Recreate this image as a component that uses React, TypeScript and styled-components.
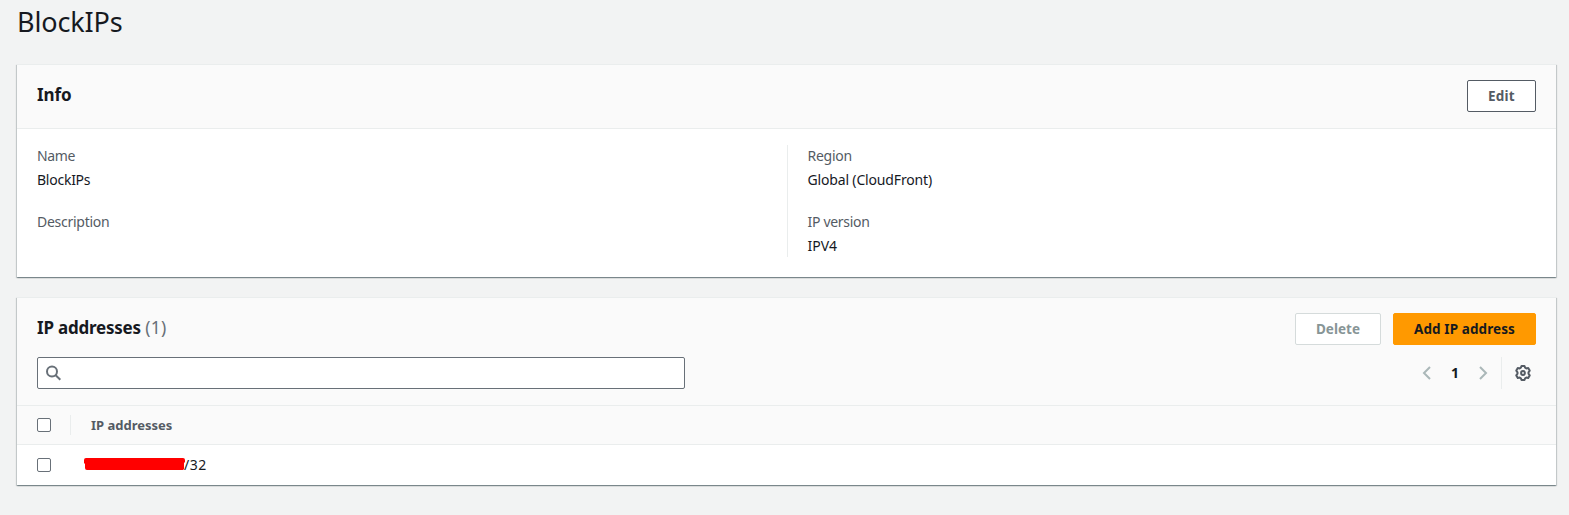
import React from "react";
import styled, { createGlobalStyle } from "styled-components";

const GlobalStyle = createGlobalStyle`
  * { box-sizing: border-box; }
  body {
    margin: 0;
    min-height: 515px;
    background: #f2f3f3;
    color: #16191f;
    font: 14px/22px "Noto Sans", sans-serif;
    overflow: hidden;
  }
`;

const Page = styled.main`
  display: flex;
  flex-direction: column;
  gap: 20px;
  padding: 4px 13px 0 17px;
`;

const Title = styled.h1`
  margin: 0 0 4px;
  height: 36px;
  font-size: 27px;
  line-height: 35px;
  font-weight: 400;
`;

const Panel = styled.section`
  background: #fff;
  border-top: 1px solid #eaeded;
  box-shadow: 0 1px 1px 0 rgba(0, 28, 36, 0.3), 1px 1px 1px 0 rgba(0, 28, 36, 0.15),
    -1px 1px 1px 0 rgba(0, 28, 36, 0.15);
`;

const PanelHeader = styled.header<{ $height: number }>`
  height: ${(p) => p.$height}px;
  padding: 15px 20px 0;
  background: #fafafa;
  border-bottom: 1px solid #eaeded;
`;

const Bar = styled.div`
  display: flex;
  justify-content: space-between;
  height: 32px;
  margin-bottom: 12px;
`;

const Heading = styled.h2`
  margin: 0;
  font-size: 17px;
  line-height: 29px;
  font-weight: 700;
`;

const Text = styled.span<{ $ls?: number }>`
  letter-spacing: ${(p) => p.$ls ?? 0}px;
`;

const Counter = styled(Text)`
  color: #687078;
  font-size: 17.5px;
  font-weight: 400;
`;

const Actions = styled.div`
  display: flex;
  gap: 12px;
`;

const tones = {
  normal: { fg: "#545b64", bg: "#fff", border: "#545b64" },
  disabled: { fg: "#879596", bg: "#fff", border: "#d5dbdb" },
  primary: { fg: "#16191f", bg: "#ff9900", border: "#ff9900" },
};

const Button = styled.button<{ $tone: keyof typeof tones; $width: number }>`
  width: ${(p) => p.$width}px;
  height: 32px;
  padding: 0;
  border: 1px solid ${(p) => tones[p.$tone].border};
  border-radius: 2px;
  background: ${(p) => tones[p.$tone].bg};
  color: ${(p) => tones[p.$tone].fg};
  font: 700 13.5px/22px "Noto Sans", sans-serif;
  white-space: nowrap;
`;

const Columns = styled.div`
  display: grid;
  grid-template-columns: 750px 1fr;
  height: 148px;
  padding: 16px 20px 20px;
`;

const Column = styled.dl<{ $divided?: boolean }>`
  display: flex;
  flex-direction: column;
  gap: 20px;
  margin: 0;
  height: 112px;
  border-left: ${(p) => (p.$divided ? "1px solid #eaeded" : "0")};
  padding-left: ${(p) => (p.$divided ? 19.5 : 0)}px;
`;

const Field = styled.div`
  height: 46px;
`;

const Label = styled.dt`
  color: #545b64;
  margin-bottom: 2px;
`;

const Value = styled.dd`
  margin: 0;
`;

const Search = styled.label`
  display: flex;
  align-items: center;
  width: 648px;
  height: 32px;
  padding-left: 8px;
  background: #fff;
  border: 1px solid #687078;
  border-radius: 2px;
`;

const Input = styled.input`
  flex: 1;
  border: 0;
  outline: 0;
  background: transparent;
`;

const Pager = styled.nav`
  display: flex;
  align-items: center;
  height: 32px;
`;

const PageNumber = styled.span`
  width: 40px;
  text-align: center;
  font-weight: 700;
`;

const Settings = styled.div`
  display: flex;
  align-items: center;
  height: 32px;
  margin-left: 10px;
  padding: 0 5px 0 13px;
  border-left: 1px solid #eaeded;
`;

const Row = styled.div<{ $head?: boolean }>`
  display: flex;
  align-items: center;
  height: ${(p) => (p.$head ? 39 : 40)}px;
  padding-left: 20px;
  background: ${(p) => (p.$head ? "#fafafa" : "#fff")};
  border-bottom: ${(p) => (p.$head ? "1px solid #eaeded" : "0")};
  color: ${(p) => (p.$head ? "#545b64" : "#16191f")};
  font-size: ${(p) => (p.$head ? 13 : 14)}px;
  font-weight: ${(p) => (p.$head ? 700 : 400)};
`;

const Checkbox = styled.input`
  appearance: none;
  width: 14px;
  height: 14px;
  margin: 0;
  border: 1px solid #687078;
  border-radius: 2px;
  background: #fff;
`;

const HeadCell = styled.div`
  display: flex;
  align-items: center;
  height: 20px;
  margin-left: 19px;
  padding-left: 20px;
  border-left: 1px solid #eaeded;
`;

const Address = styled.div`
  display: flex;
  align-items: center;
  margin-left: 33px;
`;

const Chevron = ({ next }: { next?: boolean }) => (
  <svg width="16" height="16" viewBox="0 0 16 16" fill="none" stroke="#aab7b8" strokeWidth="2">
    <path d={next ? "M5 2 11 8 5 14" : "M11 2 5 8 11 14"} />
  </svg>
);

const Gear = () => (
  <svg width="16" height="16" viewBox="0 0 16 16" fill="none" stroke="#545b64" strokeWidth="2" strokeLinejoin="round">
    <path d="M6.5 1h3l.6 1.700 1.200.7 1.900-.4 1.500 2.600L13.500 7.300v1.400l1.200 1.700-1.500 2.600-1.900-.4-1.200.7-.6 1.700h-3l-.6-1.700-1.200-.7-1.900.4L1.300 10.400l1.200-1.700V7.300L1.300 5.600 2.800 3l1.900.4 1.200-.7z" />
    <circle cx="8" cy="8" r="1.900" />
  </svg>
);

const SearchIcon = () => (
  <svg width="16" height="16" viewBox="0 0 16 16" fill="none" stroke="#687078" strokeWidth="2">
    <circle cx="6" cy="6.500" r="5" />
    <path d="M9.700 10.200 14.300 14.800" />
  </svg>
);

const RedactionMark = styled.svg`
  display: block;
  margin-bottom: 2px;
`;

const Redaction = () => (
  <RedactionMark width="100" height="14" viewBox="0 0 100 14" overflow="visible">
    <path d="M2 1H99Q101 1 101 3V5L100 6V12L99 13H3Q1 13 1 11V7L0 6V3Q0 1 2 1Z" fill="#f00" />
  </RedactionMark>
);

export default function App() {
  return (
    <>
      <GlobalStyle />
      <Page>
        <Title><Text $ls={-0.15}>BlockIPs</Text></Title>
        <Panel>
          <PanelHeader $height={64}>
            <Bar>
              <Heading><Text $ls={-0.1}>Info</Text></Heading>
              <Button $tone="normal" $width={69}><Text $ls={0.2}>Edit</Text></Button>
            </Bar>
          </PanelHeader>
          <Columns>
            <Column>
              <Field>
                <Label><Text $ls={-0.4}>Name</Text></Label>
                <Value><Text $ls={-0.25}>BlockIPs</Text></Value>
              </Field>
              <Field><Label><Text $ls={-0.27}>Description</Text></Label></Field>
            </Column>
            <Column $divided>
              <Field>
                <Label><Text $ls={-0.25}>Region</Text></Label>
                <Value><Text $ls={-0.16}>Global (CloudFront)</Text></Value>
              </Field>
              <Field>
                <Label><Text $ls={-0.3}>IP version</Text></Label>
                <Value><Text>IPV4</Text></Value>
              </Field>
            </Column>
          </Columns>
        </Panel>
        <Panel>
          <PanelHeader $height={108}>
            <Bar>
              <Heading><Text $ls={-0.22}>IP addresses</Text> <Counter $ls={0.3}>(1)</Counter></Heading>
              <Actions>
                <Button $tone="disabled" $width={86}><Text $ls={0.05}>Delete</Text></Button>
                <Button $tone="primary" $width={143}><Text $ls={0.1}>Add IP address</Text></Button>
              </Actions>
            </Bar>
            <Bar>
              <Search><SearchIcon /><Input aria-label="Find IP addresses" /></Search>
              <Pager>
                <Chevron />
                <PageNumber>1</PageNumber>
                <Chevron next />
                <Settings><Gear /></Settings>
              </Pager>
            </Bar>
          </PanelHeader>
          <Row $head>
            <Checkbox type="checkbox" />
            <HeadCell><Text>IP addresses</Text></HeadCell>
          </Row>
          <Row>
            <Checkbox type="checkbox" />
            <Address><Redaction /><Text $ls={0.5}>/32</Text></Address>
          </Row>
        </Panel>
      </Page>
    </>
  );
}
